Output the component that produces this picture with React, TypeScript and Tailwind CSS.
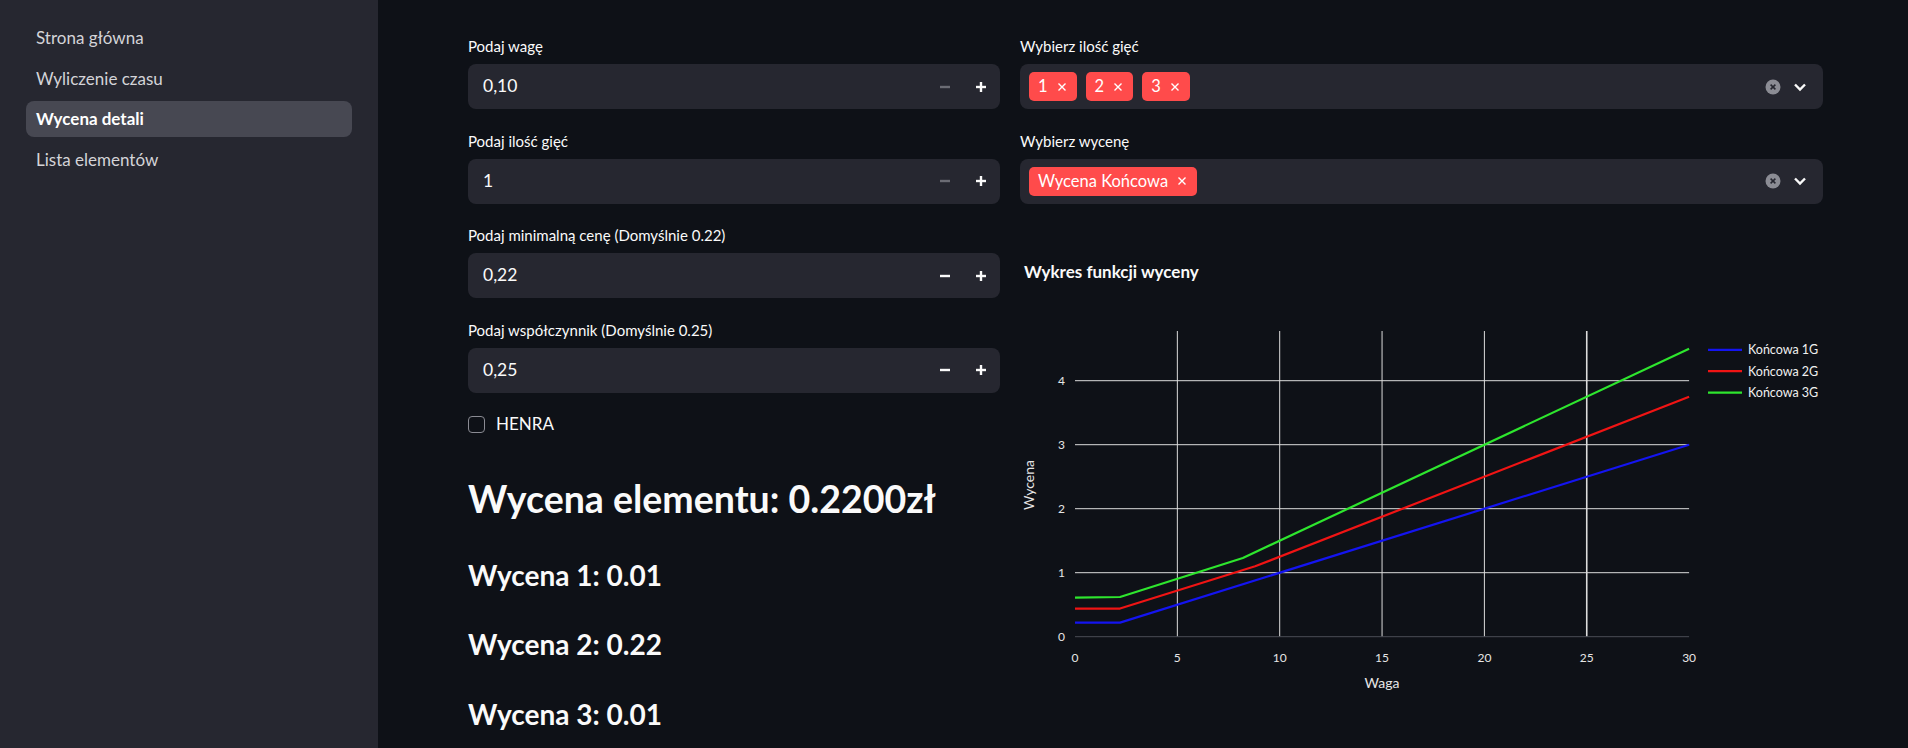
import React from "react";

const font = { fontFamily: "Lato, 'Noto Sans', sans-serif" };

const navItems = ["Strona główna", "Wyliczenie czasu", "Wycena detali", "Lista elementów"];

const Minus = ({ dim }: { dim?: boolean }) => (
  <svg width="12" height="12" viewBox="0 0 12 12">
    <line x1="1" y1="6" x2="11" y2="6" stroke={dim ? "#6b6c74" : "#fafafa"} strokeWidth="2.4" />
  </svg>
);

const Plus = () => (
  <svg width="12" height="12" viewBox="0 0 12 12">
    <line x1="1" y1="6" x2="11" y2="6" stroke="#fafafa" strokeWidth="2.4" />
    <line x1="6" y1="1" x2="6" y2="11" stroke="#fafafa" strokeWidth="2.4" />
  </svg>
);

const NumberInput = ({ label, value, dim, first }: { label: string; value: string; dim?: boolean; first?: boolean }) => (
  <div className={first ? "" : "mt-[20.5px]"}>
    <div className="text-[15px] leading-[22px] text-[#fafafa] mb-[7px]">{label}</div>
    <div className="h-[45px] rounded-[8px] bg-[#262730] flex items-center pl-[15px]">
      <span className="flex-1 text-[17.5px] text-[#fafafa]">{value}</span>
      <div className="w-[36px] flex justify-center">
        <Minus dim={dim} />
      </div>
      <div className="w-[36px] flex justify-center mr-[1px]">
        <Plus />
      </div>
    </div>
  </div>
);

const Tag = ({ text }: { text: string }) => (
  <div className="h-[29px] rounded-[5px] bg-[#ff4b4b] flex items-center pl-[9px] pr-[10px] gap-[9px] text-white text-[16.5px]">
    <span>{text}</span>
    <svg width="10" height="10" viewBox="0 0 10 10">
      <path d="M1.5 1.5 L8.5 8.5 M8.5 1.5 L1.5 8.5" stroke="white" strokeWidth="1.4" />
    </svg>
  </div>
);

const MultiSelect = ({ label, tags, first }: { label: string; tags: string[]; first?: boolean }) => (
  <div className={first ? "" : "mt-[20.5px]"}>
    <div className="text-[15px] leading-[22px] text-[#fafafa] mb-[7px]">{label}</div>
    <div className="h-[45px] rounded-[8px] bg-[#262730] flex items-center pl-[9px] pr-[16px]">
      <div className="flex-1 flex gap-[9px]">
        {tags.map((t) => (
          <Tag key={t} text={t} />
        ))}
      </div>
      <svg width="16" height="16" viewBox="0 0 16 16" className="mr-[12px]">
        <circle cx="8" cy="8" r="7.5" fill="#8b8c94" />
        <path d="M5.6 5.6 L10.4 10.4 M10.4 5.6 L5.6 10.4" stroke="#262730" strokeWidth="1.5" />
      </svg>
      <svg width="14" height="10" viewBox="0 0 14 10">
        <path d="M2 2.5 L7 7.5 L12 2.5" stroke="#fafafa" strokeWidth="2.4" fill="none" />
      </svg>
    </div>
  </div>
);

const X = (v: number) => 55 + v * 20.47;
const Y = (v: number) => 336.7 - v * 64;

const series = [
  { name: "Końcowa 1G", color: "#1414f0", pts: [[0, 0.22], [2.2, 0.22], [30, 3]] },
  { name: "Końcowa 2G", color: "#f01414", pts: [[0, 0.44], [2.2, 0.44], [8.8, 1.1], [30, 3.75]] },
  { name: "Końcowa 3G", color: "#2ee62e", pts: [[0, 0.61], [2.2, 0.62], [8.2, 1.23], [30, 4.5]] },
];

const Chart = () => (
  <svg width="803" height="420" viewBox="0 0 803 420" className="block mt-[16.3px]" style={font}>
    {[1, 2, 3, 4].map((v) => (
      <line key={v} x1={X(0)} x2={X(30)} y1={Y(v)} y2={Y(v)} stroke="#dcdcdc" strokeWidth="1" />
    ))}
    {[5, 10, 15, 20, 25].map((v) => (
      <line key={v} x1={X(v)} x2={X(v)} y1={31} y2={Y(0)} stroke="#dcdcdc" strokeWidth={v === 25 ? 1.6 : 1} />
    ))}
    <line x1={X(0)} x2={X(30)} y1={Y(0)} y2={Y(0)} stroke="#4a4d55" strokeWidth="1" />
    {series.map((s) => (
      <polyline
        key={s.name}
        points={s.pts.map(([a, b]) => `${X(a)},${Y(b)}`).join(" ")}
        fill="none"
        stroke={s.color}
        strokeWidth="2.2"
        strokeLinejoin="round"
      />
    ))}
    {[0, 1, 2, 3, 4].map((v) => (
      <text key={v} x={45} y={Y(v) + 4.5} textAnchor="end" fontSize="12" fill="#e6e6e6">
        {v}
      </text>
    ))}
    {[0, 5, 10, 15, 20, 25, 30].map((v) => (
      <text key={v} x={X(v)} y={361.5} textAnchor="middle" fontSize="12" fill="#e6e6e6">
        {v}
      </text>
    ))}
    <text x={362} y={388} textAnchor="middle" fontSize="14" fill="#e6e6e6">
      Waga
    </text>
    <text x={14} y={185} textAnchor="middle" fontSize="14" fill="#e6e6e6" transform="rotate(-90 14 185)">
      Wycena
    </text>
    {series.map((s, i) => (
      <g key={s.name}>
        <line x1={688} x2={722} y1={49.8 + i * 21.4} y2={49.8 + i * 21.4} stroke={s.color} strokeWidth="2.2" />
        <text x={728} y={54.1 + i * 21.4} fontSize="12.5" fill="#f0f0f0">
          {s.name}
        </text>
      </g>
    ))}
  </svg>
);

export default function App() {
  return (
    <div className="flex h-[748px] w-full overflow-hidden bg-[#0e1117] text-[#fafafa]" style={font}>
      <aside className="w-[378px] shrink-0 bg-[#262730] pt-[20px] px-[26px]">
        <nav className="flex flex-col gap-[4.6px]">
          {navItems.map((n) => {
            const active = n === "Wycena detali";
            return (
              <div
                key={n}
                className={
                  active
                    ? "h-[36px] rounded-[8px] bg-[#474852] flex items-center px-[10px] text-[17px] font-bold text-white"
                    : "h-[36px] rounded-[8px] flex items-center px-[10px] text-[17px] text-[#d4d4d8]"
                }
              >
                {n}
              </div>
            );
          })}
        </nav>
      </aside>
      <main className="flex-1 pl-[90px] pt-[35px]">
        <div className="flex gap-[20px]">
          <div className="w-[532px] shrink-0">
            <NumberInput label="Podaj wagę" value="0,10" dim first />
            <NumberInput label="Podaj ilość gięć" value="1" dim />
            <NumberInput label="Podaj minimalną cenę (Domyślnie 0.22)" value="0,22" />
            <NumberInput label="Podaj współczynnik (Domyślnie 0.25)" value="0,25" />
            <label className="mt-[20.5px] h-[22px] flex items-center gap-[11px]">
              <span className="w-[17px] h-[17px] rounded-[4px] border border-[#8a8b93] bg-[#0e1117]" />
              <span className="text-[17px] text-[#fafafa]">HENRA</span>
            </label>
            <h2 className="mt-[40px] text-[37.5px] leading-[48px] font-bold text-[#fafafa]">
              Wycena elementu: 0.2200zł
            </h2>
            <h3 className="mt-[34px] text-[28px] leading-[36px] font-bold">Wycena 1: 0.01</h3>
            <h3 className="mt-[33px] text-[28px] leading-[36px] font-bold">Wycena 2: 0.22</h3>
            <h3 className="mt-[33.5px] text-[28px] leading-[36px] font-bold">Wycena 3: 0.01</h3>
          </div>
          <div className="w-[803px] shrink-0">
            <MultiSelect label="Wybierz ilość gięć" tags={["1", "2", "3"]} first />
            <MultiSelect label="Wybierz wycenę" tags={["Wycena Końcowa"]} />
            <div className="mt-[56px] pl-[4px] text-[17px] leading-[24px] font-bold text-[#fafafa]">
              Wykres funkcji wyceny
            </div>
            <Chart />
          </div>
        </div>
      </main>
    </div>
  );
}
